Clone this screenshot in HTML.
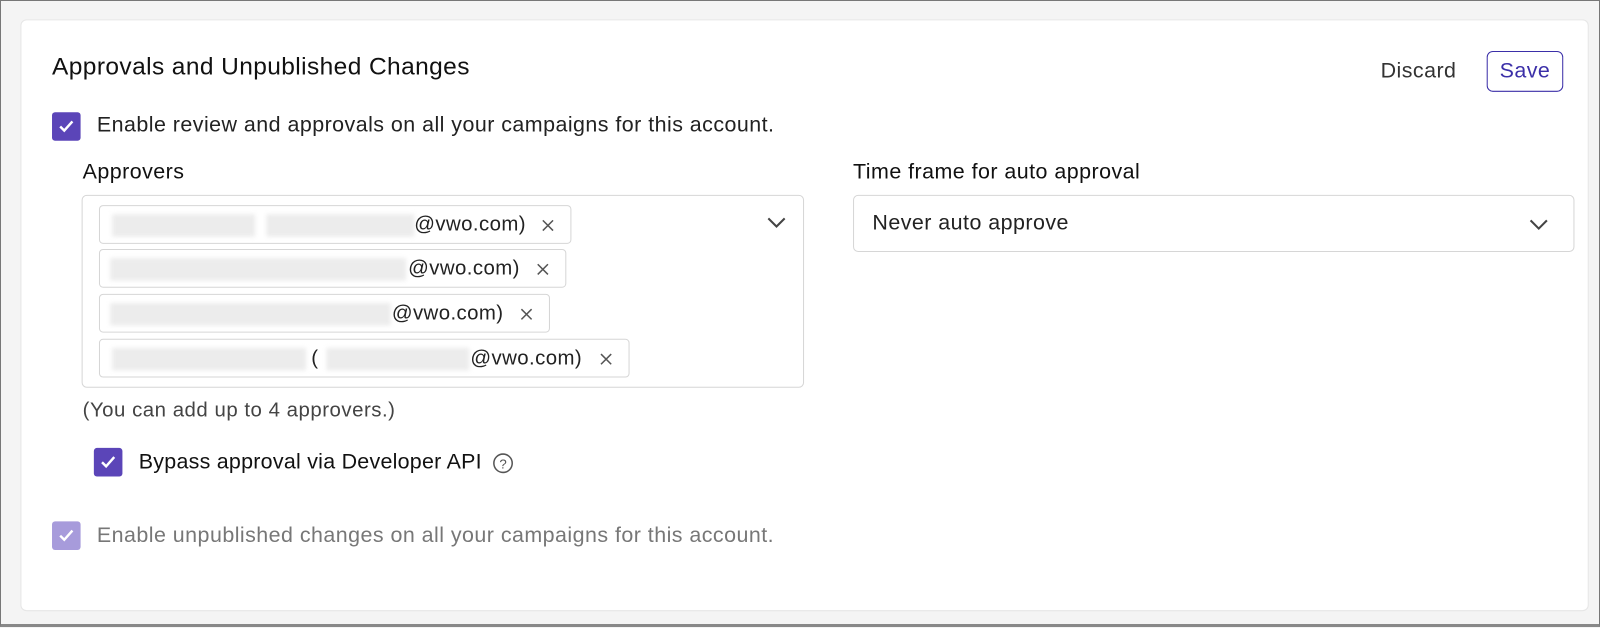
<!DOCTYPE html><html><head><style>
*{box-sizing:border-box;margin:0;padding:0}
body{width:1600px;height:627px;background:#f4f4f4;font-family:"Liberation Sans",sans-serif;position:relative;overflow:hidden;border:1px solid #777;border-bottom:3px solid #888;}
#w{position:absolute;left:0;top:0;width:1568px;height:614px;transform:scale(1.0204);transform-origin:0 0}
.card{position:absolute;left:19px;top:18px;width:1537px;height:580px;background:#fff;border:1px solid #e6e6e6;border-radius:6px}
.a{position:absolute;white-space:nowrap}
.t{font-size:21px;letter-spacing:0.45px}
.cb{position:absolute;width:28px;height:28px;border-radius:3px;background:#5b45b8}
.cb svg{position:absolute;left:5px;top:6px}
.chip{position:absolute;left:96px;height:38px;border:1px solid #d6d6d6;border-radius:4px;font-size:20px;letter-spacing:0.4px;color:#222;line-height:36px}
.blur{position:absolute;top:8px;height:22px;background:#ececec;filter:blur(2px)}
.x{position:absolute;top:12px}
</style></head><body>
<div id="w">
<div class="card"></div>
<div class="a" style="left:50px;top:51px;font-size:24px;letter-spacing:0.4px;color:#111;font-weight:500">Approvals and Unpublished Changes</div>
<div class="a t" style="left:1352px;top:57px;color:#333">Discard</div>
<div class="a t" style="left:1456px;top:49px;width:75px;height:40px;border:1.5px solid #3b2fa8;border-radius:6px;color:#3b2fa8;text-align:center;line-height:38px">Save</div>
<div class="cb" style="left:50px;top:109px"><svg width="18" height="16" viewBox="0 0 18 16"><path d="M3 8l4 4 8-9" stroke="#fff" stroke-width="2.4" fill="none"/></svg></div>
<div class="a t" style="left:94px;top:110px;color:#222">Enable review and approvals on all your campaigns for this account.</div>
<div class="a t" style="left:80px;top:156px;color:#111">Approvers</div>
<div class="a t" style="left:835px;top:156px;color:#111">Time frame for auto approval</div>
<div class="a" style="left:79px;top:190px;width:708px;height:189px;border:1px solid #d6d6d6;border-radius:5px"></div>
<svg class="a" style="left:750px;top:210px" width="20" height="14"><path d="M2 3l8 8 8-8" stroke="#444" stroke-width="2" fill="none"/></svg>
<svg width="0" height="0" style="position:absolute"><defs><symbol id="xx" viewBox="0 0 14 14"><path d="M2 2l10 10M12 2L2 12" stroke="#555" stroke-width="1.5"/></symbol></defs></svg>
<div class="chip" style="top:200px;width:463px"><div class="blur" style="left:12px;width:140px"></div><div class="blur" style="left:163px;width:145px"></div><span class="a" style="left:308px">@vwo.com)</span><svg class="x" style="left:432px" width="14" height="14"><use href="#xx"/></svg></div>
<div class="chip" style="top:243px;width:458px"><div class="blur" style="left:10px;width:290px"></div><span class="a" style="left:302px">@vwo.com)</span><svg class="x" style="left:427px" width="14" height="14"><use href="#xx"/></svg></div>
<div class="chip" style="top:287px;width:442px"><div class="blur" style="left:10px;width:275px"></div><span class="a" style="left:286px">@vwo.com)</span><svg class="x" style="left:411px" width="14" height="14"><use href="#xx"/></svg></div>
<div class="chip" style="top:331px;width:520px"><div class="blur" style="left:12px;width:190px"></div><span class="a" style="left:207px">(</span><div class="blur" style="left:222px;width:140px"></div><span class="a" style="left:363px">@vwo.com)</span><svg class="x" style="left:489px" width="14" height="14"><use href="#xx"/></svg></div>
<div class="a" style="left:80px;top:390px;font-size:20px;letter-spacing:0.5px;color:#444">(You can add up to 4 approvers.)</div>
<div class="a" style="left:835px;top:190px;width:707px;height:56px;border:1px solid #d6d6d6;border-radius:5px"></div>
<div class="a t" style="left:854px;top:206px;color:#222">Never auto approve</div>
<svg class="a" style="left:1497px;top:212px" width="20" height="14"><path d="M2 3l8 8 8-8" stroke="#444" stroke-width="2" fill="none"/></svg>
<div class="cb" style="left:91px;top:438px"><svg width="18" height="16" viewBox="0 0 18 16"><path d="M3 8l4 4 8-9" stroke="#fff" stroke-width="2.4" fill="none"/></svg></div>
<div class="a" style="left:135px;top:440px;color:#111;font-size:21px;letter-spacing:0.25px">Bypass approval via Developer API</div>
<svg class="a" style="left:481px;top:442px" width="22" height="22"><circle cx="11" cy="11" r="9" stroke="#555" stroke-width="1.5" fill="none"/><text x="11" y="16" font-size="13" text-anchor="middle" fill="#555" font-family="Liberation Sans">?</text></svg>
<div class="cb" style="left:50px;top:510px;background:#a79bdb"><svg width="18" height="16" viewBox="0 0 18 16"><path d="M3 8l4 4 8-9" stroke="#fff" stroke-width="2.4" fill="none"/></svg></div>
<div class="a t" style="left:94px;top:512px;color:#777">Enable unpublished changes on all your campaigns for this account.</div>
</div>
</body></html>
